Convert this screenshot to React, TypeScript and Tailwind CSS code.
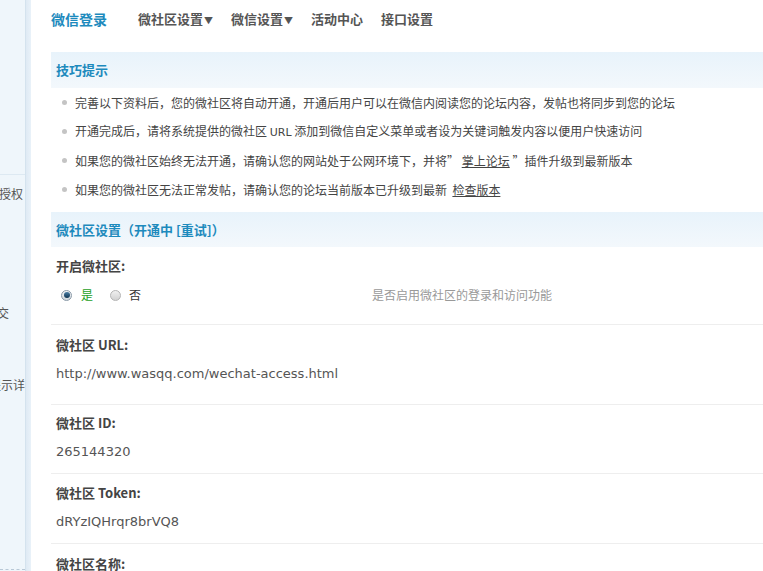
import { useState } from 'react';

const cjk = 'font-["Noto_Sans_CJK_SC","Noto_Sans",sans-serif]';
const latin = 'font-["DejaVu_Sans","Noto_Sans_CJK_SC",sans-serif]';

const tips = [
  <>完善以下资料后，您的微社区将自动开通，开通后用户可以在微信内阅读您的论坛内容，发帖也将同步到您的论坛</>,
  <>
    开通完成后，请将系统提供的微社区 <span className={latin + ' text-[11px]'}>URL</span> 添加到微信自定义菜单或者设为关键词触发内容以便用户快速访问
  </>,
  <>
    如果您的微社区始终无法开通，请确认您的网站处于公网环境下，并将” <a className="underline">掌上论坛</a> ”插件升级到最新版本
  </>,
  <>
    如果您的微社区无法正常发帖，请确认您的论坛当前版本已升级到最新&nbsp;&nbsp;<a className="underline">检查版本</a>
  </>,
];

function Radio({ checked }: { checked: boolean }) {
  return (
    <span
      className={
        'flex h-[11px] w-[11px] items-center justify-center rounded-full border ' +
        (checked
          ? 'border-[#8a9aa8] bg-gradient-to-b from-[#f4f6f8] to-[#cfd6dc]'
          : 'border-[#b4b4b4] bg-gradient-to-b from-[#f0f0f0] to-[#d2d2d2]')
      }
    >
      {checked && <span className="h-[6px] w-[6px] rounded-full bg-gradient-to-b from-[#4a7fa6] to-[#0f3552]" />}
    </span>
  );
}

function Field({ label, value, className }: { label: string; value: string; className: string }) {
  return (
    <div className={'border-b border-[#eeeeee] px-[5px] ' + className}>
      <div className="flex h-[20px] items-center text-[13px] font-bold text-[#444]">{label}</div>
      <div className={'mt-[9px] flex h-[20px] items-center text-[13px] text-[#555] ' + latin}>{value}</div>
    </div>
  );
}

export default function App() {
  const [on, setOn] = useState(true);

  return (
    <div className={'flex h-[571px] w-full overflow-hidden bg-white text-[12px] text-[#444] ' + cjk}>
      {/* side menu, scrolled off to the left */}
      <div className="flex w-[26px] shrink-0 flex-col border-r border-[#d4e3ee] bg-[#eff6fb] text-[12px] text-[#555]">
        <div className="h-[175px] border-b border-[#dde9f2]" />
        <div className="mt-[9px] flex h-[20px] items-center justify-end overflow-hidden whitespace-nowrap pr-[2px]">
          站点授权
        </div>
        <div className="mt-[99px] flex h-[20px] items-center justify-end overflow-hidden whitespace-nowrap pr-[16px]">
          资料提交
        </div>
        <div className="mt-[52px] flex h-[20px] items-center justify-end overflow-hidden whitespace-nowrap">
          提示详
        </div>
        <div className="mt-auto mb-[1px] border-t border-dashed border-[#b8c8d6]" />
      </div>
      <div className="w-[5px] shrink-0 bg-gradient-to-r from-[#dfeaf4] to-[#e9f2f9]" />

      <div className="min-w-0 flex-1 pl-[20px]">
        {/* top nav */}
        <div className="flex h-[38px] items-center">
          <span className="mr-[31px] text-[14px] font-bold text-[#1d8abd]">微信登录</span>
          <div className="flex items-center gap-[18px] text-[13px] font-bold text-[#555]">
            <span>
              微社区设置<span className="ml-[1px] text-[9px]">▼</span>
            </span>
            <span>
              微信设置<span className="ml-[1px] text-[9px]">▼</span>
            </span>
            <span>活动中心</span>
            <span>接口设置</span>
          </div>
        </div>

        {/* tips */}
        <div className="mt-[14px] flex h-[36px] items-center bg-gradient-to-b from-[#e8f3fb] to-[#f3f8fc] pl-[5px] text-[13px] font-bold text-[#1d8abd]">
          技巧提示
        </div>
        <ul>
          {tips.map((t, i) => (
            <li key={i} className="flex h-[29px] items-center whitespace-nowrap pl-[11px] text-[#444]">
              <span className="mr-[8px] h-[5px] w-[5px] shrink-0 rounded-full bg-[#c4c4c4]" />
              <span>{t}</span>
            </li>
          ))}
        </ul>

        {/* settings */}
        <div className="mt-[8px] flex h-[35px] items-center bg-gradient-to-b from-[#e8f3fb] to-[#f3f8fc] pl-[5px] text-[13px] font-bold text-[#1d8abd]">
          微社区设置（开通中 [重试]）
        </div>

        <div className="border-b border-[#eeeeee] px-[5px] pt-[9px] pb-[19px]">
          <div className="flex h-[20px] items-center text-[13px] font-bold text-[#444]">开启微社区:</div>
          <div className="mt-[9px] flex h-[20px] items-center">
            <div className="flex w-[316px] items-center pl-[5px]">
              <label className="flex cursor-pointer items-center" onClick={() => setOn(true)}>
                <Radio checked={on} />
                <span className="ml-[9px] text-[#1ea01e]">是</span>
              </label>
              <label className="ml-[17px] flex cursor-pointer items-center" onClick={() => setOn(false)}>
                <Radio checked={!on} />
                <span className="ml-[8px] text-[#333]">否</span>
              </label>
            </div>
            <span className="text-[#999]">是否启用微社区的登录和访问功能</span>
          </div>
        </div>

        <Field label="微社区 URL:" value="http://www.wasqq.com/wechat-access.html" className="pt-[10px] pb-[20px]" />
        <Field label="微社区 ID:" value="265144320" className="pt-[8px] pb-[11px]" />
        <Field label="微社区 Token:" value="dRYzIQHrqr8brVQ8" className="pt-[9px] pb-[11px]" />
        <div className="px-[5px] pt-[10px]">
          <div className="flex h-[20px] items-center text-[13px] font-bold text-[#444]">微社区名称:</div>
        </div>
      </div>
    </div>
  );
}
